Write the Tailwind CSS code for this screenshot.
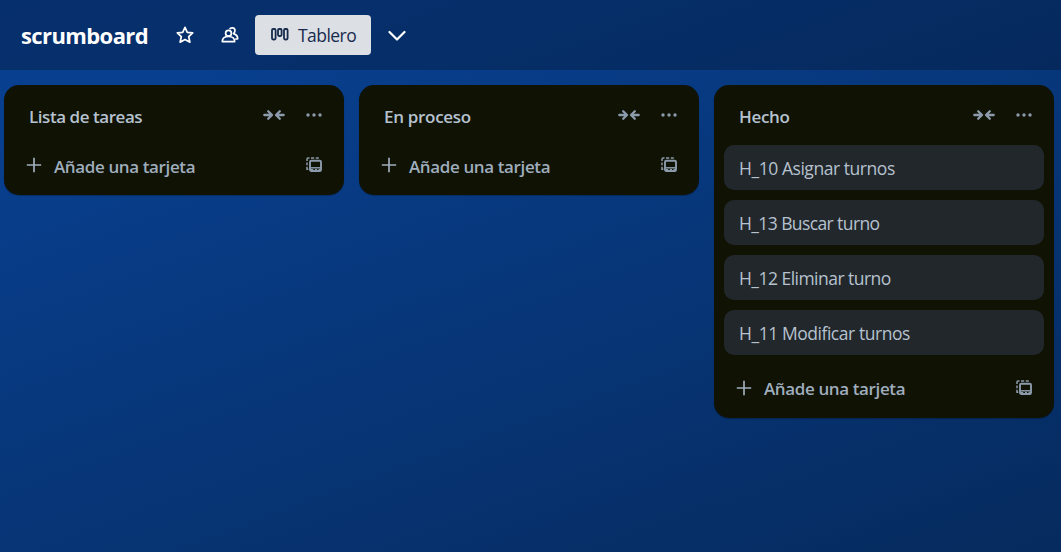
<!DOCTYPE html>
<html lang="es">
<head>
<meta charset="utf-8">
<title>scrumboard</title>
<script src="https://cdn.jsdelivr.net/npm/@tailwindcss/browser@4"></script>
</head>
<body class="h-screen overflow-hidden bg-[linear-gradient(160deg,#084090_0%,#083f8e_15%,#062b5e_100%)] font-['Open_Sans','Noto_Sans',sans-serif] text-[17px] text-[#b6c2cf]">
<svg class="hidden">
  <symbol id="collapse" viewBox="0 0 22 12"><path d="M1.300 6H8M5.200 2.200L9 6L5.200 9.800M20.700 6H14M16.800 2.200L13 6L16.800 9.800" fill="none" stroke="currentColor" stroke-width="2.300" stroke-linecap="round" stroke-linejoin="round"/></symbol>
  <symbol id="more" viewBox="0 0 16 4"><circle cx="2" cy="2" r="1.700"/><circle cx="8" cy="2" r="1.700"/><circle cx="14" cy="2" r="1.700"/></symbol>
  <symbol id="plus" viewBox="0 0 16 16"><path d="M8 .8V15.200M.8 8H15.200" fill="none" stroke="currentColor" stroke-width="1.700"/></symbol>
  <symbol id="template" viewBox="0 0 16 16"><g fill="none" stroke="currentColor"><rect x="4" y="3.800" width="11" height="10.200" rx="1.300" stroke-width="1.900"/><path d="M4 10.800H15" stroke-width="1.500"/><path d="M5 12.700H7.200M9 12.700H11M12.500 12.700H14" stroke-width="1.400"/><path d="M1 4V2.200Q1 1 2.200 1H3.500M5 1H8.200M9.800 1H12.800M1 5.500V8.300M1 9.700V12.200H2.300" stroke-width="1.500"/></g></symbol>
</svg>
<header class="flex h-[70px] items-center bg-black/24 pl-[21px] text-white">
  <h1 class="w-[155px] text-[22px] leading-none font-bold tracking-[-0.6px]">scrumboard</h1>
  <svg class="size-[18px]" viewBox="0 0 18 18" fill="none" stroke="currentColor" stroke-width="1.700" stroke-linejoin="round"><path d="M9 1.300L11.300 6.300L16.700 6.900L12.700 10.700L13.900 16.200L9 13.500L4.100 16.200L5.300 10.700L1.300 6.900L6.700 6.300Z"/></svg>
  <svg class="ml-[27px] size-[18px]" viewBox="0 0 18 18" fill="none" stroke="currentColor" stroke-width="1.700" stroke-linejoin="round"><circle cx="7.500" cy="7.200" r="2.900"/><path d="M1.300 15.600C1.300 12.500 3.300 10.500 7.500 10.500S13.700 12.500 13.700 15.600ZM8.700 3.300C9.300 1.300 13.800 1 14 4.300C14 6.300 13 7 12.500 7.600C15.500 8.500 16.800 10.500 16.600 13H14.200"/></svg>
  <div class="ml-[16px] flex h-[40px] w-[116px] items-center rounded-[4px] bg-[#dcdfe4] pl-[16px] text-[#172b4d]">
    <svg class="mb-[2px] h-[13px] w-[18px]" viewBox="0 0 18 13" fill="none" stroke="currentColor" stroke-width="1.800"><rect x="1" y="1" width="3.600" height="10.500" rx="1.200"/><rect x="7" y="1" width="3.600" height="7" rx="1.200"/><rect x="13" y="1" width="3.600" height="10.500" rx="1.200"/></svg>
    <span class="ml-[9px] pt-[2px] text-[17.5px] leading-none tracking-[-0.55px]">Tablero</span>
  </div>
  <svg class="ml-[17px] h-[11px] w-[18px]" viewBox="0 0 18 11" fill="none" stroke="currentColor" stroke-width="2.200" stroke-linecap="round" stroke-linejoin="round"><path d="M1.500 2L9 9.500L16.500 2"/></svg>
</header>
<main class="flex items-start gap-[15px] px-[4px] pt-[15px]">
  <section class="h-[110px] w-[340px] shrink-0 rounded-[15px] bg-[#101204] px-[10px] shadow-[0_1px_1px_#00000040]">
    <div class="flex h-[60px] items-center pt-[3px] pr-[12px] pl-[15px]"><h2 class="flex-1 font-semibold tracking-[-0.45px]">Lista de tareas</h2><svg class="mb-[3px] h-[12px] w-[22px] text-[#8c9bab]"><use href="#collapse"/></svg><svg class="mb-[3px] ml-[21px] h-[4px] w-[16px] fill-[#8c9bab]"><use href="#more"/></svg></div>
    <div class="flex h-[40px] items-center pr-[12px] pl-[12px] text-[#9fadbc]"><svg class="mb-[1px] size-[16px]"><use href="#plus"/></svg><span class="ml-[12px] flex-1 pt-[3px] font-semibold tracking-[-0.38px]">Añade una tarjeta</span><svg class="size-[16px] text-[#8c9bab]"><use href="#template"/></svg></div>
  </section>
  <section class="h-[110px] w-[340px] shrink-0 rounded-[15px] bg-[#101204] px-[10px] shadow-[0_1px_1px_#00000040]">
    <div class="flex h-[60px] items-center pt-[3px] pr-[12px] pl-[15px]"><h2 class="flex-1 font-semibold tracking-[-0.3px]">En proceso</h2><svg class="mb-[3px] h-[12px] w-[22px] text-[#8c9bab]"><use href="#collapse"/></svg><svg class="mb-[3px] ml-[21px] h-[4px] w-[16px] fill-[#8c9bab]"><use href="#more"/></svg></div>
    <div class="flex h-[40px] items-center pr-[12px] pl-[12px] text-[#9fadbc]"><svg class="mb-[1px] size-[16px]"><use href="#plus"/></svg><span class="ml-[12px] flex-1 pt-[3px] font-semibold tracking-[-0.38px]">Añade una tarjeta</span><svg class="size-[16px] text-[#8c9bab]"><use href="#template"/></svg></div>
  </section>
  <section class="h-[333px] w-[340px] shrink-0 rounded-[15px] bg-[#101204] px-[10px] shadow-[0_1px_1px_#00000040]">
    <div class="flex h-[60px] items-center pt-[3px] pr-[12px] pl-[15px]"><h2 class="flex-1 font-semibold tracking-[-0.3px]">Hecho</h2><svg class="mb-[3px] h-[12px] w-[22px] text-[#8c9bab]"><use href="#collapse"/></svg><svg class="mb-[3px] ml-[21px] h-[4px] w-[16px] fill-[#8c9bab]"><use href="#more"/></svg></div>
    <div class="flex flex-col gap-[10px] text-[17.5px] tracking-[-0.45px]">
      <div class="flex h-[45px] items-center rounded-[10px] bg-[#22272b] px-[15px] pt-[2px]"><span>H_10 Asignar turnos</span></div>
      <div class="flex h-[45px] items-center rounded-[10px] bg-[#22272b] px-[15px] pt-[2px] tracking-[-0.6px]"><span>H_13 Buscar turno</span></div>
      <div class="flex h-[45px] items-center rounded-[10px] bg-[#22272b] px-[15px] pt-[2px] tracking-[-0.53px]"><span>H_12 Eliminar turno</span></div>
      <div class="flex h-[45px] items-center rounded-[10px] bg-[#22272b] px-[15px] pt-[2px]"><span>H_11 Modificar turnos</span></div>
    </div>
    <div class="mt-[13px] flex h-[40px] items-center pr-[12px] pl-[12px] text-[#9fadbc]"><svg class="mb-[1px] size-[16px]"><use href="#plus"/></svg><span class="ml-[12px] flex-1 pt-[2px] font-semibold tracking-[-0.38px]">Añade una tarjeta</span><svg class="size-[16px] text-[#8c9bab]"><use href="#template"/></svg></div>
  </section>
</main>
</body>
</html>
